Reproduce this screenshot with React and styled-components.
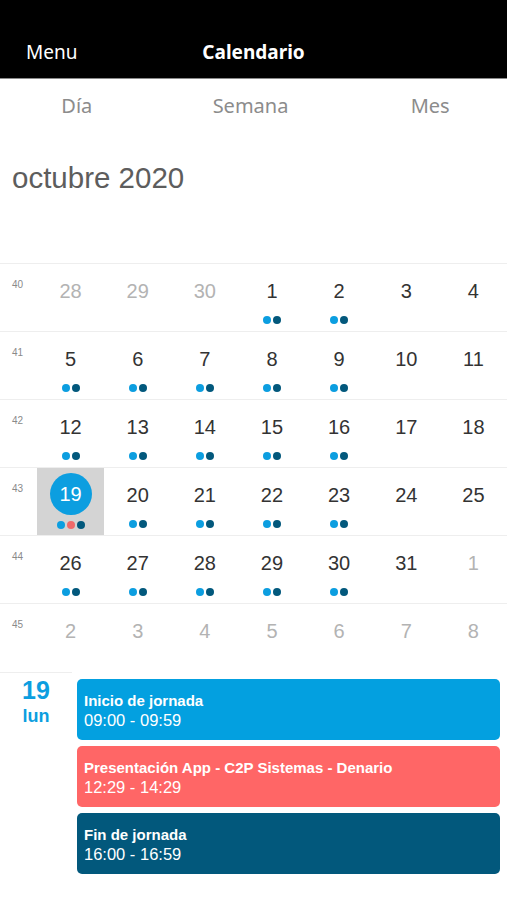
import React from "react";
import styled, { createGlobalStyle } from "styled-components";

const Global = createGlobalStyle`
  html, body { margin: 0; padding: 0; background: #fff; }
  body { font-family: "Liberation Sans", Arial, sans-serif; }
  * { box-sizing: border-box; }
`;

const Page = styled.div`
  width: 507px;
  height: 900px;
  overflow: hidden;
  background: #fff;
`;

const Header = styled.div`
  height: 79px;
  background: #000;
  border-bottom: 1px solid #8a8a8a;
  display: grid;
  grid-template-columns: 1fr auto 1fr;
  align-items: center;
  padding: 26px 26px 0;
  color: #fff;
`;

const MenuText = styled.div`
  font-family: "Noto Sans", "Liberation Sans", sans-serif;
  font-size: 19px;
`;

const Title = styled.div`
  font-family: "Noto Sans", "Liberation Sans", sans-serif;
  font-size: 19px;
  font-weight: 700;
`;

const Tabs = styled.div`
  display: flex;
  height: 52px;
  align-items: center;
`;

const Tab = styled.div`
  flex: 1;
  text-align: center;
  font-family: "Noto Sans", "Liberation Sans", sans-serif;
  font-size: 20px;
  color: #8c8c8c;
  padding-left: ${(p) => p.$shift || 0}px;
`;

const MonthTitle = styled.div`
  height: 132px;
  padding: 30px 12px 0;
  font-size: 29.5px;
  color: #5d5d5d;
  font-family: "Liberation Sans", Arial, sans-serif;
`;

const Grid = styled.div`
  border-top: 1px solid #eeeeee;
`;

const WeekRow = styled.div`
  display: grid;
  grid-template-columns: 37px repeat(7, 1fr);
  height: 68px;
  border-bottom: 1px solid ${(p) => (p.$last ? "transparent" : "#eeeeee")};
`;

const WeekNum = styled.div`
  font-size: 10px;
  color: #8a8a8a;
  padding: 15px 0 0 12px;
`;

const DayCell = styled.div`
  display: flex;
  flex-direction: column;
  align-items: center;
  background: ${(p) => (p.$selected ? "#d4d4d4" : "transparent")};
`;

const DayNum = styled.div`
  margin-top: ${(p) => (p.$selected ? "5px" : "15px")};
  width: ${(p) => (p.$selected ? "42px" : "auto")};
  height: ${(p) => (p.$selected ? "42px" : "24px")};
  border-radius: 50%;
  background: ${(p) => (p.$selected ? "#0c9ee0" : "transparent")};
  color: ${(p) => (p.$selected ? "#fff" : p.$muted ? "#b3b3b3" : "#333")};
  font-size: 20px;
  display: flex;
  align-items: center;
  justify-content: center;
`;

const Dots = styled.div`
  display: flex;
  gap: 2px;
  margin-top: ${(p) => (p.$selected ? "6px" : "13px")};
`;

const Dot = styled.span`
  width: 8px;
  height: 8px;
  border-radius: 50%;
  background: ${(p) => p.$color};
`;

const DaySection = styled.div`
  display: flex;
  align-items: flex-start;
`;

const DayLabel = styled.div`
  width: 72px;
  margin-right: 5px;
  flex-shrink: 0;
  display: flex;
  flex-direction: column;
  align-items: center;
  color: #0c9ee0;
  border-top: 1px solid #eeeeee;
  padding-top: 2px;
  font-family: "Liberation Sans", Arial, sans-serif;
  font-weight: 700;
`;

const DayLabelNum = styled.div`
  font-size: 25px;
  line-height: 30px;
`;

const DayLabelName = styled.div`
  font-size: 18px;
  line-height: 22px;
`;

const Events = styled.div`
  flex: 1;
  display: flex;
  flex-direction: column;
  gap: 6px;
  padding: 7px 7px 0 0;
`;

const Event = styled.div`
  height: 61px;
  border-radius: 5px;
  background: ${(p) => p.$color};
  color: #fff;
  padding: 12px 7px 0;
  font-family: "Liberation Sans", Arial, sans-serif;
`;

const EventTitle = styled.div`
  font-size: 15px;
  font-weight: 700;
  line-height: 19px;
`;

const EventTime = styled.div`
  font-size: 16.5px;
  line-height: 21px;
`;

const C1 = "#0c9ee0";
const C2 = "#02587c";
const C3 = "#f06a6a";

const weeks = [
  { n: 40, days: [[28, 1], [29, 1], [30, 1], [1, 0, 1], [2, 0, 1], [3], [4]] },
  { n: 41, days: [[5, 0, 1], [6, 0, 1], [7, 0, 1], [8, 0, 1], [9, 0, 1], [10], [11]] },
  { n: 42, days: [[12, 0, 1], [13, 0, 1], [14, 0, 1], [15, 0, 1], [16, 0, 1], [17], [18]] },
  { n: 43, days: [[19, 0, 2], [20, 0, 1], [21, 0, 1], [22, 0, 1], [23, 0, 1], [24], [25]] },
  { n: 44, days: [[26, 0, 1], [27, 0, 1], [28, 0, 1], [29, 0, 1], [30, 0, 1], [31], [1, 1]] },
  { n: 45, days: [[2, 1], [3, 1], [4, 1], [5, 1], [6, 1], [7, 1], [8, 1]] },
];

const events = [
  { title: "Inicio de jornada", time: "09:00 - 09:59", color: "#03a0e0" },
  { title: "Presentación App - C2P Sistemas - Denario", time: "12:29 - 14:29", color: "#ff6666" },
  { title: "Fin de jornada", time: "16:00 - 16:59", color: "#02587c" },
];

export default function App() {
  return (
    <Page>
      <Global />
      <Header>
        <MenuText>Menu</MenuText>
        <Title>Calendario</Title>
        <div />
      </Header>
      <Tabs>
        <Tab $shift={-12}>Día</Tab>
        <Tab $shift={20}>Semana</Tab>
        <Tab $shift={26}>Mes</Tab>
      </Tabs>
      <MonthTitle>octubre 2020</MonthTitle>
      <Grid>
        {weeks.map((w, wi) => (
          <WeekRow key={w.n} $last={wi === weeks.length - 1}>
            <WeekNum>{w.n}</WeekNum>
            {w.days.map(([d, muted, dots], i) => {
              const selected = dots === 2;
              return (
                <DayCell key={i} $selected={selected}>
                  <DayNum $selected={selected} $muted={muted}>
                    {d}
                  </DayNum>
                  {dots ? (
                    <Dots $selected={selected}>
                      <Dot $color={C1} />
                      {selected && <Dot $color={C3} />}
                      <Dot $color={C2} />
                    </Dots>
                  ) : null}
                </DayCell>
              );
            })}
          </WeekRow>
        ))}
      </Grid>
      <DaySection>
        <DayLabel>
          <DayLabelNum>19</DayLabelNum>
          <DayLabelName>lun</DayLabelName>
        </DayLabel>
        <Events>
          {events.map((e) => (
            <Event key={e.title} $color={e.color}>
              <EventTitle>{e.title}</EventTitle>
              <EventTime>{e.time}</EventTime>
            </Event>
          ))}
        </Events>
      </DaySection>
    </Page>
  );
}
